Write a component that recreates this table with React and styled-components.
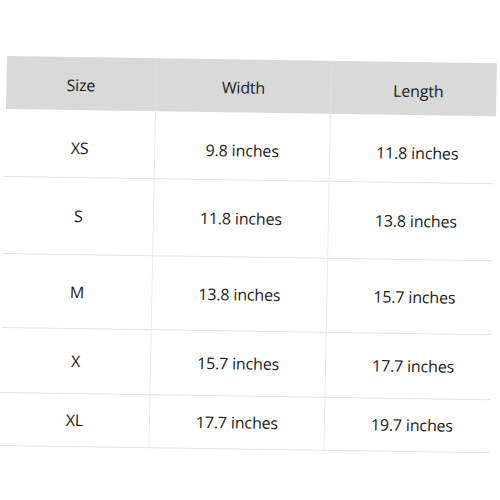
import React from 'react'
import styled, { createGlobalStyle } from 'styled-components'

const GlobalStyle = createGlobalStyle`
  html, body {
    margin: 0;
    padding: 0;
    background: #ffffff;
  }
  body {
    font-family: 'Open Sans', 'Noto Sans', 'Liberation Sans', sans-serif;
    color: #202020;
  }
`

const Page = styled.div`
  width: 500px;
  height: 500px;
  padding: 56px 0 0 7px;
  box-sizing: border-box;
  overflow: hidden;
`

// the photo of the chart is slightly tilted, so the sheet gets a small shear
const Sheet = styled.div`
  width: 490px;
  transform-origin: 0 0;
  transform: matrix(1, 0.0147, -0.0195, 1, 0, 0);
`

const Row = styled.div`
  display: grid;
  grid-template-columns: 149px 175px 166px;
  height: ${props => props.h}px;
  box-sizing: border-box;
  background: ${props => (props.head ? '#d9d9d9' : 'transparent')};
  border-bottom: ${props => (props.head ? 'none' : '1px solid #e2e2e2')};
`

const Cell = styled.div`
  display: flex;
  align-items: center;
  justify-content: center;
  font-size: 16px;
  letter-spacing: -0.15px;
  padding-top: ${props => props.shift || 0}px;
  padding-left: ${props => (props.last ? 9 : 0)}px;
  border-left: ${props => (props.first ? 'none' : `1px solid ${props.head ? '#e0e0e0' : '#ebebeb'}`)};
  white-space: nowrap;
`

const rows = [
  { size: 'XS', width: '9.8 inches', length: '11.8 inches', h: 68, shift: 8 },
  { size: 'S', width: '11.8 inches', length: '13.8 inches', h: 77 },
  { size: 'M', width: '13.8 inches', length: '15.7 inches', h: 74 },
  { size: 'X', width: '15.7 inches', length: '17.7 inches', h: 65 },
  { size: 'XL', width: '17.7 inches', length: '19.7 inches', h: 53 },
]

export default function App() {
  return (
    <Page>
      <GlobalStyle />
      <Sheet>
        <Row head h={53}>
          <Cell head first shift={2}>Size</Cell>
          <Cell head shift={3}>Width</Cell>
          <Cell head last shift={4}>Length</Cell>
        </Row>
        {rows.map(r => (
          <Row key={r.size} h={r.h}>
            <Cell first shift={r.shift}>{r.size}</Cell>
            <Cell shift={r.shift}>{r.width}</Cell>
            <Cell last shift={r.shift}>{r.length}</Cell>
          </Row>
        ))}
      </Sheet>
    </Page>
  )
}
